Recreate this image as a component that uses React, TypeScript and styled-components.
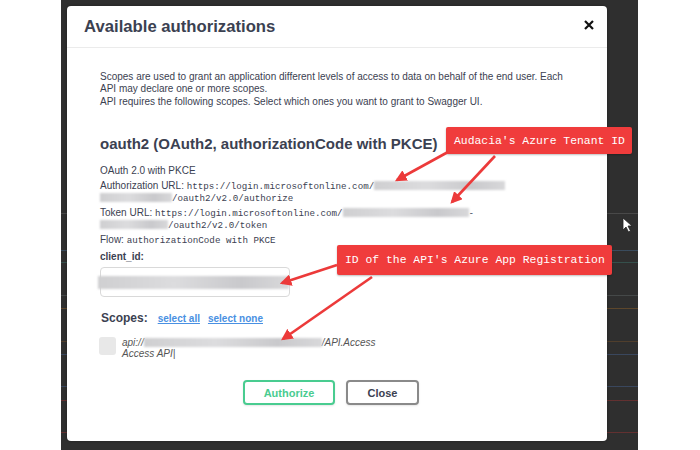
import styled, { createGlobalStyle } from "styled-components"

const GlobalStyle = createGlobalStyle`
  html, body {
    margin: 0;
    padding: 0;
    background: #fff;
  }
  body {
    font-family: "Liberation Sans", Arial, sans-serif;
    color: #3b4151;
  }
`

// faint table rows of the page behind the dialog
const rows: [number, string][] = [
  [213, "rgba(120,120,120,.35)"],
  [250, "rgba(70,110,150,.45)"],
  [262, "rgba(60,120,110,.45)"],
  [295, "rgba(110,120,120,.35)"],
  [308, "rgba(150,100,40,.45)"],
  [341, "rgba(120,80,40,.45)"],
  [354, "rgba(70,100,150,.45)"],
  [386, "rgba(70,100,150,.45)"],
  [400, "rgba(150,50,50,.5)"],
  [432, "rgba(150,50,50,.5)"],
]
const rowLines = rows
  .map(([y, c]) => `linear-gradient(${c}, ${c}) 0 ${y}px / 100% 1px no-repeat`)
  .join(", ")

const Stage = styled.div`
  position: relative;
  width: 700px;
  height: 450px;
  overflow: hidden;
  background: #fff;
`

const Backdrop = styled.div`
  box-sizing: border-box;
  margin-left: 61px;
  width: 577px;
  height: 450px;
  padding: 6px 0 0 6px;
  background: ${rowLines}, #2f2f2f;
`

const Modal = styled.div`
  box-sizing: border-box;
  width: 540px;
  height: 435px;
  background: #fff;
  border-radius: 4px;
  box-shadow: 0 0 3px rgba(0, 0, 0, 0.35);
  display: flex;
  flex-direction: column;
`

const Header = styled.div`
  height: 41px;
  border-bottom: 1px solid #ebebeb;
  display: flex;
  align-items: center;
  justify-content: space-between;
  padding: 0 13px 0 17px;
`

const Title = styled.h3`
  margin: 0;
  font-size: 16.7px;
  font-weight: 700;
  color: #3b4151;
`

const CloseX = styled.button`
  border: 0;
  background: none;
  padding: 0;
  width: 10px;
  height: 10px;
  display: flex;
  margin-top: -3px;
`

const Body = styled.div`
  padding: 23px 45px 0 33px;
  display: flex;
  flex-direction: column;
`

const Desc = styled.p`
  margin: 0 0 1px;
  font-size: 10px;
  line-height: 12px;
  white-space: nowrap;
`

const SchemeTitle = styled.h4`
  margin: 26px 0 13px;
  font-size: 15px;
  line-height: 17px;
  font-weight: 700;
`

const Info = styled.p`
  margin: 0 0 3px;
  font-size: 10px;
  line-height: 12px;
  white-space: nowrap;
`

const Code = styled.code`
  font-family: "Liberation Mono", Consolas, monospace;
  font-size: 9.2px;
  line-height: 1;
  color: #3b4151;
`

const Redact = styled.span<{ $w: number }>`
  display: inline-block;
  width: ${(p) => p.$w}px;
  height: 9px;
  vertical-align: -1px;
  background: linear-gradient(90deg, #cfcfd1, #dcdcde 40%, #c9c9cc 75%, #d8d8da);
  filter: blur(1px);
`

const Label = styled.label`
  display: block;
  margin: 2px 0 4px;
  font-size: 10px;
  line-height: 12px;
  font-weight: 700;
`

const Field = styled.div`
  box-sizing: border-box;
  width: 190px;
  height: 30px;
  border: 1px solid #d9d9d9;
  border-radius: 4px;
  display: flex;
  align-items: center;
`

const FieldBlur = styled(Redact)`
  height: 13px;
  margin-left: -3px;
`

const ScopesRow = styled.div`
  display: flex;
  align-items: baseline;
  gap: 8px;
  margin: 14px 0 12px 1px;
`

const ScopesLabel = styled.span`
  font-size: 12px;
  line-height: 14px;
  font-weight: 700;
  margin-right: 2px;
`

const LinkButton = styled.a`
  font-size: 10px;
  font-weight: 700;
  color: #4990e2;
  text-decoration: underline;
`

const Scope = styled.div`
  display: flex;
  gap: 6px;
  margin-left: -1px;
`

const Check = styled.span`
  width: 17px;
  height: 18px;
  border-radius: 3px;
  background: #e8e8e8;
  flex: none;
`

const ScopeText = styled.div`
  font-size: 10px;
  line-height: 11px;
  font-style: italic;
  color: #555;
`

const ButtonRow = styled.div`
  display: flex;
  justify-content: center;
  gap: 11px;
  margin-top: 21px;
`

const Btn = styled.button<{ $tone: "green" | "gray" }>`
  box-sizing: border-box;
  height: 25px;
  width: ${(p) => (p.$tone === "green" ? 92 : 73)}px;
  border: 2px solid ${(p) => (p.$tone === "green" ? "#49cc90" : "#8a8a8a")};
  border-radius: 4px;
  background: #fff;
  color: ${(p) => (p.$tone === "green" ? "#49cc90" : "#3b4151")};
  font-family: "Liberation Sans", Arial, sans-serif;
  font-size: 11px;
  font-weight: 700;
  box-shadow: 0 1px 2px rgba(0, 0, 0, 0.1);
`

const Callout = styled.div<{ $x: number; $y: number; $h: number }>`
  position: absolute;
  left: ${(p) => p.$x}px;
  top: ${(p) => p.$y}px;
  height: ${(p) => p.$h}px;
  padding: 0 7px 0 8px;
  display: flex;
  align-items: center;
  background: #f03c3c;
  border-radius: 2px;
  box-shadow: 0 1px 2px rgba(0, 0, 0, 0.25);
  font-family: "Liberation Mono", Consolas, monospace;
  font-size: 11.4px;
  color: #fff;
  white-space: pre;
`

const Overlay = styled.svg`
  position: absolute;
  left: 0;
  top: 0;
  pointer-events: none;
`

const arrows = [
  [448, 152, 397, 180],
  [495, 156, 452, 202],
  [337, 265, 282, 283],
  [372, 277, 283, 339],
]

export default function App() {
  return (
    <Stage>
      <GlobalStyle />
      <Backdrop>
        <Modal>
          <Header>
            <Title>Available authorizations</Title>
            <CloseX aria-label="Close">
              <svg width="10" height="10" viewBox="0 0 10 10">
                <path d="M1 1 L9 9 M9 1 L1 9" stroke="#111" strokeWidth="2.2" />
              </svg>
            </CloseX>
          </Header>
          <Body>
            <Desc>
              Scopes are used to grant an application different levels of access to data on behalf of the end user. Each
              <br />
              API may declare one or more scopes.
            </Desc>
            <Desc>API requires the following scopes. Select which ones you want to grant to Swagger UI.</Desc>
            <SchemeTitle>oauth2 (OAuth2, authorizationCode with PKCE)</SchemeTitle>
            <Info>OAuth 2.0 with PKCE</Info>
            <Info>
              Authorization URL: <Code>https://login.microsoftonline.com/</Code>
              <Redact $w={131} />
              <br />
              <Redact $w={72} />
              <Code>/oauth2/v2.0/authorize</Code>
            </Info>
            <Info>
              Token URL: <Code> https://login.microsoftonline.com/</Code>
              <Redact $w={126} />
              <Code>-</Code>
              <br />
              <Redact $w={68} />
              <Code>/oauth2/v2.0/token</Code>
            </Info>
            <Info>
              Flow: <Code>authorizationCode with PKCE</Code>
            </Info>
            <Label>client_id:</Label>
            <Field>
              <FieldBlur $w={191} />
            </Field>
            <ScopesRow>
              <ScopesLabel>Scopes:</ScopesLabel>
              <LinkButton>select all</LinkButton>
              <LinkButton>select none</LinkButton>
            </ScopesRow>
            <Scope>
              <Check />
              <ScopeText>
                api://
                <Redact $w={178} />
                /API.Access
                <br />
                Access API|
              </ScopeText>
            </Scope>
            <ButtonRow>
              <Btn $tone="green">Authorize</Btn>
              <Btn $tone="gray">Close</Btn>
            </ButtonRow>
          </Body>
        </Modal>
      </Backdrop>

      <Callout $x={446} $y={127} $h={27}>
        Audacia's Azure Tenant ID
      </Callout>
      <Callout $x={337} $y={245} $h={30}>
        ID of the API's Azure App Registration
      </Callout>

      <Overlay width="700" height="450">
        <defs>
          <marker id="head" viewBox="0 0 10 10" refX="8" refY="5" markerWidth="4.5" markerHeight="4.5" orient="auto">
            <path d="M0 0 L10 5 L0 10 Z" fill="#ec3a3a" />
          </marker>
        </defs>
        {arrows.map(([x1, y1, x2, y2], i) => (
          <line key={i} x1={x1} y1={y1} x2={x2} y2={y2} stroke="#ec3a3a" strokeWidth="2.6" markerEnd="url(#head)" />
        ))}
        <path d="M623 218 L623 230 L626 227 L628.5 232 L630.5 231 L628 226 L632 226 Z" fill="#fff" stroke="#222" strokeWidth="0.8" />
      </Overlay>
    </Stage>
  )
}
